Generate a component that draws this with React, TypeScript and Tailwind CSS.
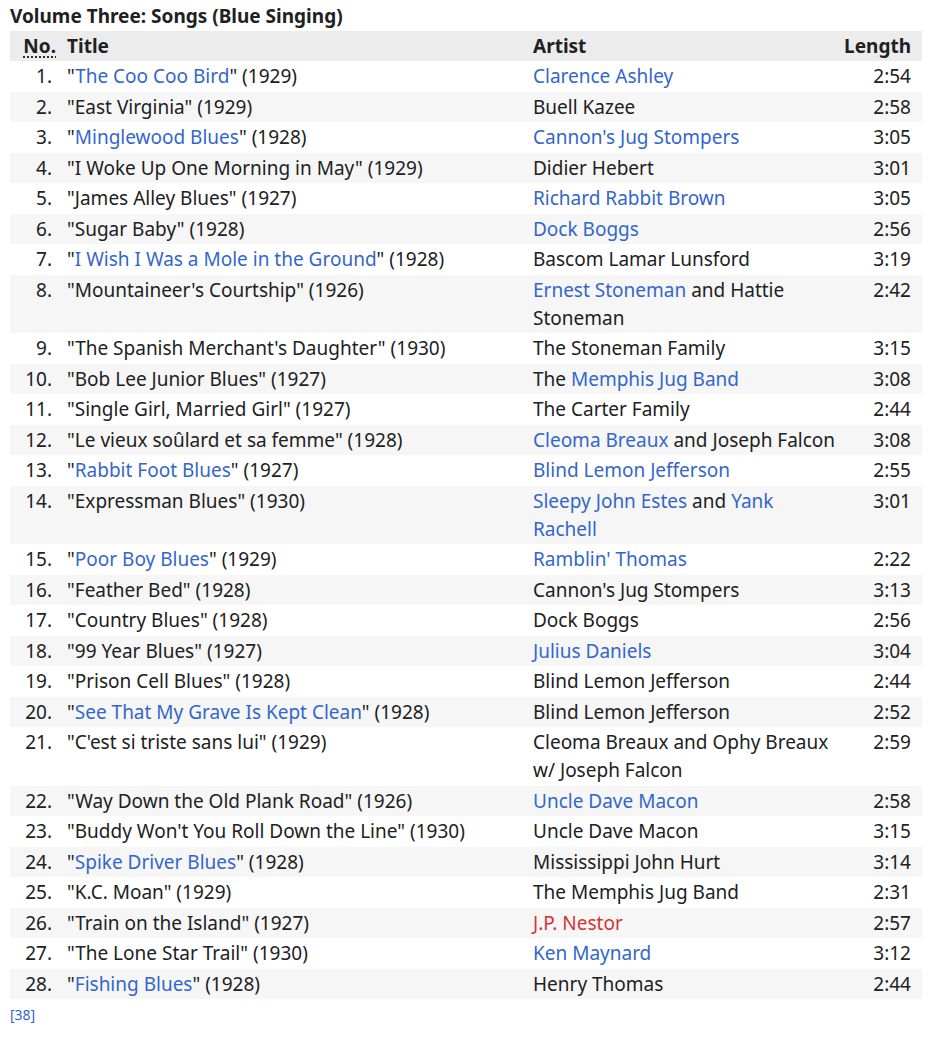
type Seg = string | { l: string; red?: boolean };

type Track = {
	title: string;
	linked?: boolean;
	year: string;
	artist: Seg[];
	length: string;
};

const tracks: Track[] = [
	{ title: "The Coo Coo Bird", linked: true, year: "1929", artist: [{ l: "Clarence Ashley" }], length: "2:54" },
	{ title: "East Virginia", year: "1929", artist: ["Buell Kazee"], length: "2:58" },
	{ title: "Minglewood Blues", linked: true, year: "1928", artist: [{ l: "Cannon's Jug Stompers" }], length: "3:05" },
	{ title: "I Woke Up One Morning in May", year: "1929", artist: ["Didier Hebert"], length: "3:01" },
	{ title: "James Alley Blues", year: "1927", artist: [{ l: "Richard Rabbit Brown" }], length: "3:05" },
	{ title: "Sugar Baby", year: "1928", artist: [{ l: "Dock Boggs" }], length: "2:56" },
	{ title: "I Wish I Was a Mole in the Ground", linked: true, year: "1928", artist: ["Bascom Lamar Lunsford"], length: "3:19" },
	{ title: "Mountaineer's Courtship", year: "1926", artist: [{ l: "Ernest Stoneman" }, " and Hattie Stoneman"], length: "2:42" },
	{ title: "The Spanish Merchant's Daughter", year: "1930", artist: ["The Stoneman Family"], length: "3:15" },
	{ title: "Bob Lee Junior Blues", year: "1927", artist: ["The ", { l: "Memphis Jug Band" }], length: "3:08" },
	{ title: "Single Girl, Married Girl", year: "1927", artist: ["The Carter Family"], length: "2:44" },
	{ title: "Le vieux soûlard et sa femme", year: "1928", artist: [{ l: "Cleoma Breaux" }, " and Joseph Falcon"], length: "3:08" },
	{ title: "Rabbit Foot Blues", linked: true, year: "1927", artist: [{ l: "Blind Lemon Jefferson" }], length: "2:55" },
	{ title: "Expressman Blues", year: "1930", artist: [{ l: "Sleepy John Estes" }, " and ", { l: "Yank Rachell" }], length: "3:01" },
	{ title: "Poor Boy Blues", linked: true, year: "1929", artist: [{ l: "Ramblin' Thomas" }], length: "2:22" },
	{ title: "Feather Bed", year: "1928", artist: ["Cannon's Jug Stompers"], length: "3:13" },
	{ title: "Country Blues", year: "1928", artist: ["Dock Boggs"], length: "2:56" },
	{ title: "99 Year Blues", year: "1927", artist: [{ l: "Julius Daniels" }], length: "3:04" },
	{ title: "Prison Cell Blues", year: "1928", artist: ["Blind Lemon Jefferson"], length: "2:44" },
	{ title: "See That My Grave Is Kept Clean", linked: true, year: "1928", artist: ["Blind Lemon Jefferson"], length: "2:52" },
	{ title: "C'est si triste sans lui", year: "1929", artist: ["Cleoma Breaux and Ophy Breaux w/ Joseph Falcon"], length: "2:59" },
	{ title: "Way Down the Old Plank Road", year: "1926", artist: [{ l: "Uncle Dave Macon" }], length: "2:58" },
	{ title: "Buddy Won't You Roll Down the Line", year: "1930", artist: ["Uncle Dave Macon"], length: "3:15" },
	{ title: "Spike Driver Blues", linked: true, year: "1928", artist: ["Mississippi John Hurt"], length: "3:14" },
	{ title: "K.C. Moan", year: "1929", artist: ["The Memphis Jug Band"], length: "2:31" },
	{ title: "Train on the Island", year: "1927", artist: [{ l: "J.P. Nestor", red: true }], length: "2:57" },
	{ title: "The Lone Star Trail", year: "1930", artist: [{ l: "Ken Maynard" }], length: "3:12" },
	{ title: "Fishing Blues", linked: true, year: "1928", artist: ["Henry Thomas"], length: "2:44" },
];

const cell = "align-top py-[1.25px] leading-[28px]";

export default function App() {
	return (
		<div className="bg-white px-[10px] text-[19px] text-[#202122] [font-family:'Noto_Sans',sans-serif]">
			<div className="pt-[2px] text-[19px] font-bold leading-[28px]">Volume Three: Songs (Blue Singing)</div>
			<table className="mt-[1px] w-[912px] table-fixed border-collapse">
				<colgroup>
					<col className="w-[47px]" />
					<col className="w-[466px]" />
					<col className="w-[316px]" />
					<col className="w-[83px]" />
				</colgroup>
				<thead>
					<tr className="bg-[#ececec] font-bold">
						<th className="py-[1px] pr-[1px] text-right leading-[28px]">
							<abbr title="Number" className="underline decoration-dotted underline-offset-4">No.</abbr>
						</th>
						<th className="py-[1px] pl-[10px] text-left leading-[28px]">Title</th>
						<th className="py-[1px] pl-[10px] text-left leading-[28px]">Artist</th>
						<th className="py-[1px] pr-[11px] text-right leading-[28px]">Length</th>
					</tr>
				</thead>
				<tbody>
					{tracks.map((t, i) => (
						<tr key={i} className={i % 2 === 1 ? "bg-[#f6f6f6]" : "bg-white"}>
							<td className={`${cell} pr-[5px] text-right`}>{i + 1}.</td>
							<td className={`${cell} pl-[10px]`}>
								"{t.linked ? <a className="text-[#3366cc]">{t.title}</a> : t.title}" ({t.year})
							</td>
							<td className={`${cell} pl-[10px]`}>
								{t.artist.map((s, j) =>
									typeof s === "string" ? (
										<span key={j}>{s}</span>
									) : (
										<a key={j} className={s.red ? "text-[#d73333]" : "text-[#3366cc]"}>
											{s.l}
										</a>
									)
								)}
							</td>
							<td className={`${cell} pr-[11px] text-right`}>{t.length}</td>
						</tr>
					))}
				</tbody>
			</table>
			<div className="mt-[8px] text-[14px] leading-[16px] text-[#3366cc]">[38]</div>
		</div>
	);
}
